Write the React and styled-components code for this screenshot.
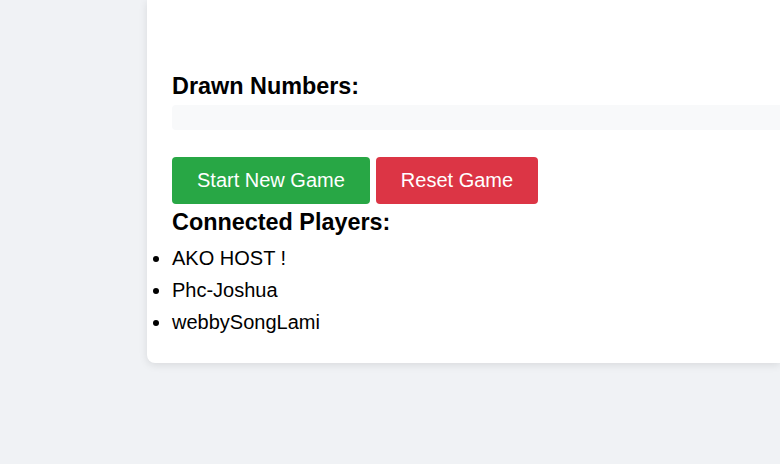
import React from "react";
import styled, { createGlobalStyle } from "styled-components";

const GlobalStyle = createGlobalStyle`
  html, body {
    margin: 0;
    padding: 0;
    overflow: hidden;
    background: #f0f2f5;
  }
  body {
    font-family: "Liberation Sans", Arial, sans-serif;
    font-size: 20px;
    color: #000;
  }
`;

const Page = styled.div`
  display: flex;
  align-items: flex-start;
  padding-left: 147px;
  min-height: 464px;
  box-sizing: border-box;
`;

const Card = styled.div`
  flex: 1;
  min-width: 0;
  padding: 73.4px 0 25px 25px;
  background: #fff;
  border-radius: 0 0 0 8px;
  box-shadow: 0 2px 8px rgba(0, 0, 0, 0.1);
`;

const Heading = styled.h3`
  margin: ${(p) => p.$mt || 0}px 0 0;
  font-size: 23.4px;
  font-weight: bold;
  line-height: normal;
`;

const DrawnBox = styled.div`
  margin-top: 5px;
  height: 25px;
  background: #f8f9fa;
  border-radius: 4px 0 0 4px;
`;

const ButtonRow = styled.div`
  display: flex;
  gap: 6px;
  margin-top: 27px;
`;

const Button = styled.button`
  border: none;
  border-radius: 4px;
  padding: 12px 25px;
  font-family: "Liberation Sans", Arial, sans-serif;
  font-size: 20px;
  line-height: 23px;
  color: #fff;
  cursor: pointer;
  background: ${(p) => (p.$variant === "danger" ? "#dc3545" : "#28a745")};
`;

const PlayerList = styled.ul`
  margin: 6px 0 0;
  padding: 0;
`;

const Player = styled.li`
  line-height: 32px;
  font-size: 20px;
`;

const players = ["AKO HOST !", "Phc-Joshua", "webbySongLami"];

export default function App() {
  return (
    <>
      <GlobalStyle />
      <Page>
        <Card>
          <Heading>Drawn Numbers:</Heading>
          <DrawnBox />
          <ButtonRow>
            <Button>Start New Game</Button>
            <Button $variant="danger">Reset Game</Button>
          </ButtonRow>
          <Heading $mt={4.5}>Connected Players:</Heading>
          <PlayerList>
            {players.map((p) => (
              <Player key={p}>{p}</Player>
            ))}
          </PlayerList>
        </Card>
      </Page>
    </>
  );
}
